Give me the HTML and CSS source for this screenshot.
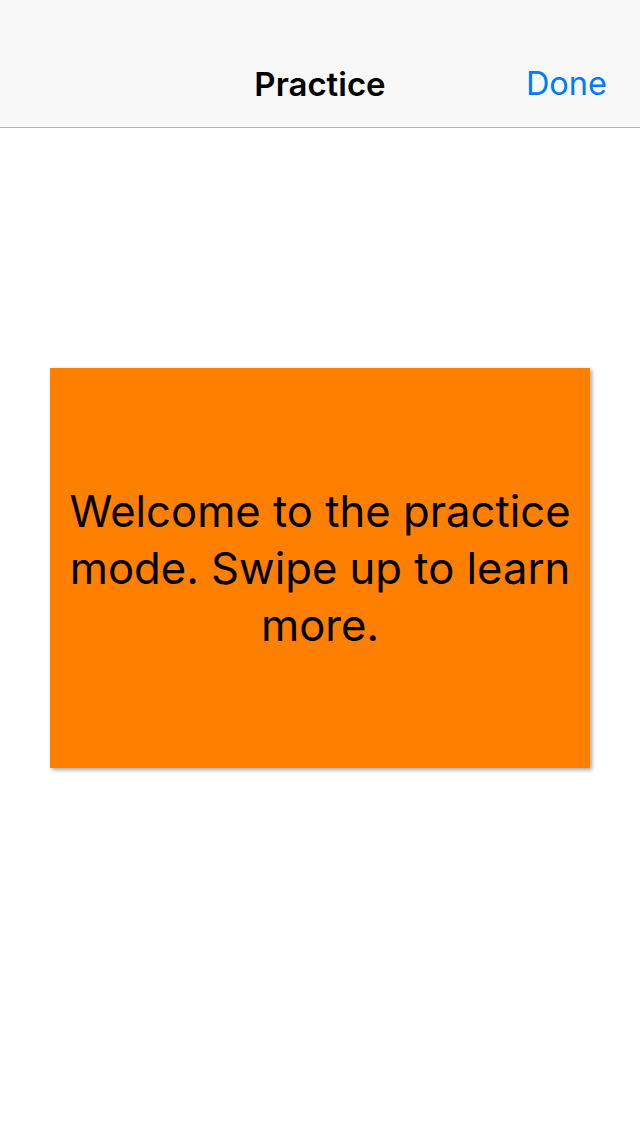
FILE: index.html
```html
<!DOCTYPE html>
<html>
<head>
<meta charset="utf-8">
<link rel="stylesheet" href="styles.css">
</head>
<body>
<header class="navbar">
  <div class="nav-side"></div>
  <div class="nav-title">Practice</div>
  <div class="nav-side nav-right"><span class="nav-done">Done</span></div>
</header>
<main class="content">
  <div class="card">
    <p class="card-text">Welcome to the practice mode. Swipe up to learn more.</p>
  </div>
</main>
</body>
</html>
```

FILE: styles.css
```css
html, body {
  margin: 0;
  padding: 0;
  width: 640px;
  height: 1136px;
  background: #ffffff;
  font-family: Inter, "Noto Sans", "Liberation Sans", sans-serif;
}
.navbar {
  height: 128px;
  box-sizing: border-box;
  background: #f8f8f8;
  border-bottom: 1px solid #b2b2b2;
  display: flex;
  align-items: flex-end;
  padding: 0 33px 23px 33px;
}
.nav-side {
  flex: 1;
  display: flex;
}
.nav-right {
  justify-content: flex-end;
}
.nav-title {
  font-size: 33px;
  font-weight: 600;
  color: #000;
  line-height: 40px;
}
.nav-done {
  font-size: 32.5px;
  color: #007aff;
  line-height: 40px;
}
.content {
  padding-top: 240px;
  display: flex;
  justify-content: center;
}
.card {
  width: 540px;
  height: 400px;
  background: #ff7f00;
  box-shadow: 2px 2px 4px rgba(0,0,0,0.35);
  display: flex;
  align-items: center;
  justify-content: center;
  box-sizing: border-box;
  padding: 0 12px;
}
.card-text {
  margin: 0;
  text-align: center;
  font-size: 43.6px;
  line-height: 57px;
  color: #000;
}
```
